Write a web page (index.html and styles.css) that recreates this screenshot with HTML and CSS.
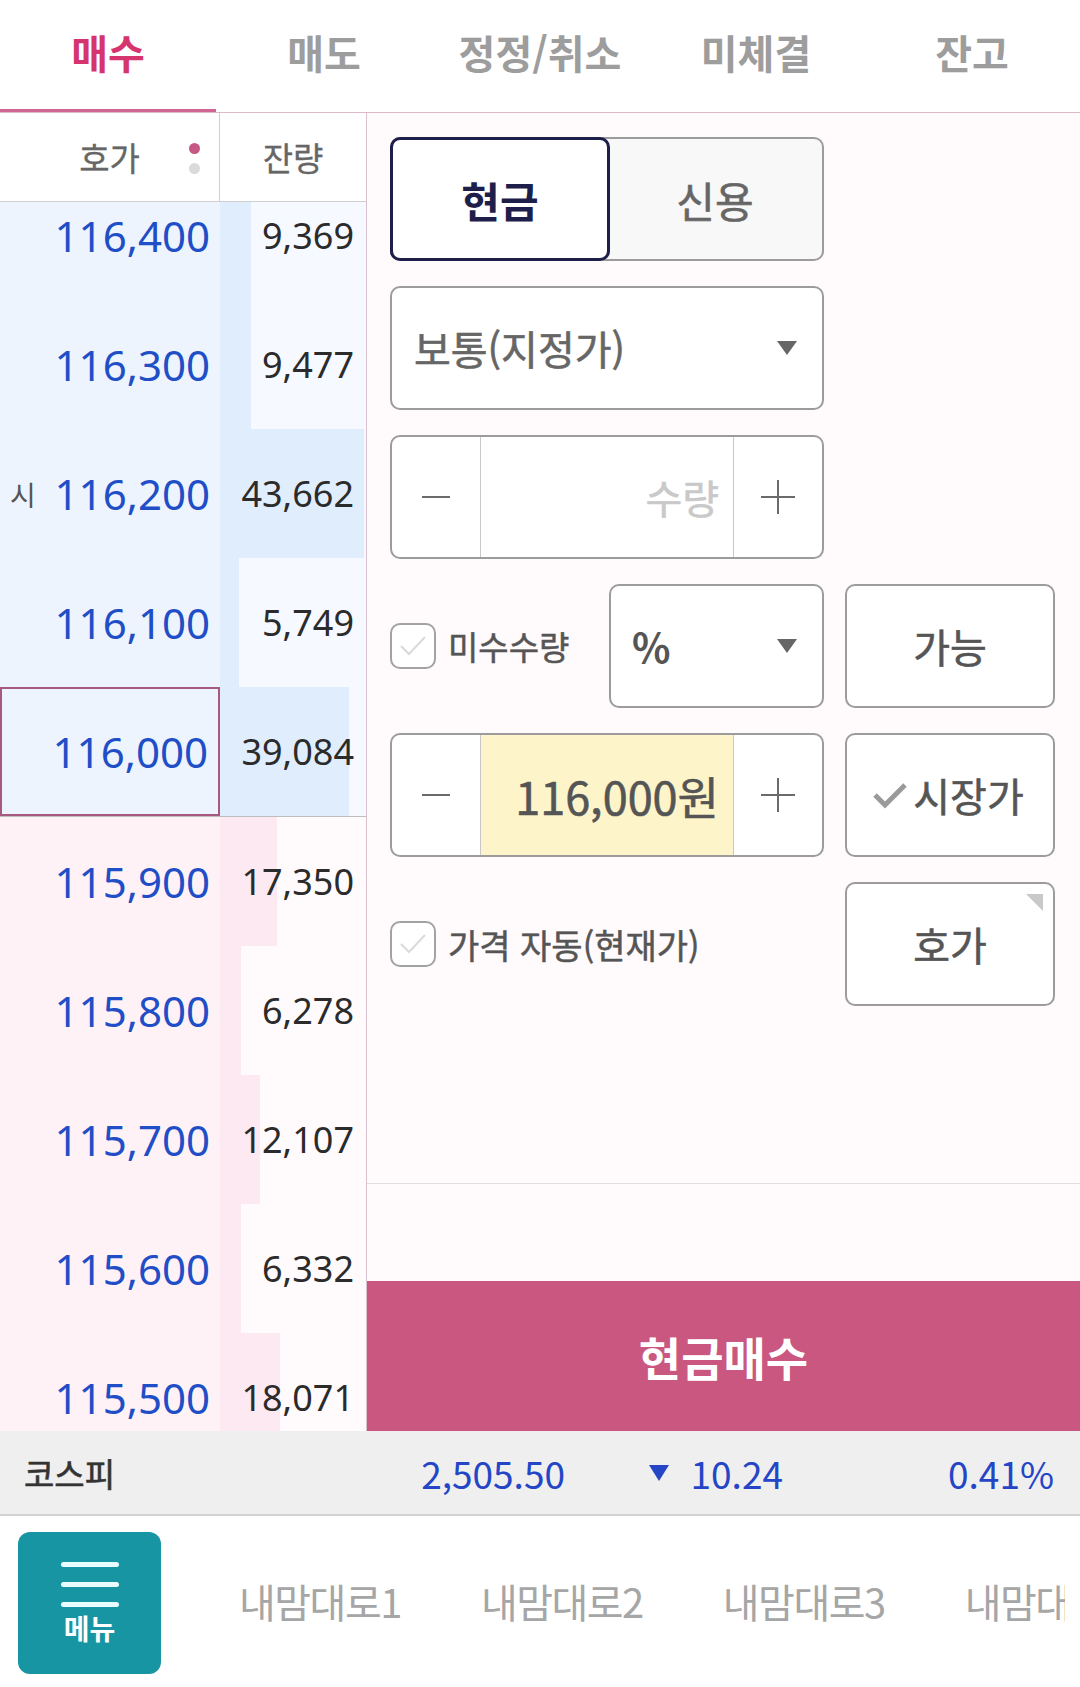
FILE: index.html
```html
<!DOCTYPE html>
<html lang="ko">
<head>
    <meta charset="UTF-8">
    <meta name="viewport" content="width=device-width, initial-scale=1.0">
    <title>주문</title>

    <link rel="stylesheet" href="styles.css">
</head>
<body>
    <div class="screen">
        <nav class="tabs">
            <div class="tab active">매수</div>
            <div class="tab">매도</div>
            <div class="tab">정정/취소</div>
            <div class="tab">미체결</div>
            <div class="tab">잔고</div>
        </nav>

        <div class="main">
            <section class="book">
                <div class="book-head">
                    <div class="head-price">호가<span class="dots"><i class="on"></i><i></i></span></div>
                    <div class="head-qty">잔량</div>
                </div>
                <div class="book-body">
                    <div class="book-rows">
                        <!-- bar widths = qty / max qty * 144px -->
                        <div class="row ask"><div class="price">116,400</div><div class="qty" style="--w: 31px">9,369</div></div>
                        <div class="row ask"><div class="price">116,300</div><div class="qty" style="--w: 31px">9,477</div></div>
                        <div class="row ask"><div class="price"><span class="tag">시</span>116,200</div><div class="qty" style="--w: 144px">43,662</div></div>
                        <div class="row ask"><div class="price">116,100</div><div class="qty" style="--w: 19px">5,749</div></div>
                        <div class="row ask current"><div class="price">116,000</div><div class="qty" style="--w: 129px">39,084</div></div>
                        <div class="row bid"><div class="price">115,900</div><div class="qty" style="--w: 57px">17,350</div></div>
                        <div class="row bid"><div class="price">115,800</div><div class="qty" style="--w: 21px">6,278</div></div>
                        <div class="row bid"><div class="price">115,700</div><div class="qty" style="--w: 40px">12,107</div></div>
                        <div class="row bid"><div class="price">115,600</div><div class="qty" style="--w: 21px">6,332</div></div>
                        <div class="row bid"><div class="price">115,500</div><div class="qty" style="--w: 60px">18,071</div></div>
                    </div>
                </div>
            </section>

            <section class="order">
                <div class="form">
                    <div class="form-row">
                        <div class="seg">
                            <div class="seg-item selected">현금</div>
                            <div class="seg-item">신용</div>
                        </div>
                    </div>

                    <div class="form-row">
                        <div class="select wide"><span>보통(지정가)</span><i class="caret"></i></div>
                    </div>

                    <div class="form-row">
                        <div class="stepper">
                            <div class="step"><svg width="28" height="28" viewBox="0 0 28 28"><path d="M0 14H28" stroke="#6a6a6a" stroke-width="2"/></svg></div>
                            <div class="field placeholder">수량</div>
                            <div class="step"><svg width="34" height="34" viewBox="0 0 34 34"><path d="M0 17H34M17 0V34" stroke="#6a6a6a" stroke-width="2"/></svg></div>
                        </div>
                    </div>

                    <div class="form-row">
                        <div class="pair">
                            <label class="check short">
                                <span class="box"><svg width="30" height="24" viewBox="0 0 30 24"><path d="M3 12L11 20L27 3" fill="none" stroke="#dadada" stroke-width="2"/></svg></span>
                                미수수량
                            </label>
                            <div class="select narrow"><span class="pct">%</span><i class="caret"></i></div>
                        </div>
                        <div class="btn">가능</div>
                    </div>

                    <div class="form-row">
                        <div class="stepper">
                            <div class="step"><svg width="28" height="28" viewBox="0 0 28 28"><path d="M0 14H28" stroke="#6a6a6a" stroke-width="2"/></svg></div>
                            <div class="field price-field">116,000원</div>
                            <div class="step"><svg width="34" height="34" viewBox="0 0 34 34"><path d="M0 17H34M17 0V34" stroke="#6a6a6a" stroke-width="2"/></svg></div>
                        </div>
                        <div class="btn market">
                            <svg width="36" height="28" viewBox="0 0 36 28"><path d="M3 14L13 24L33 4" fill="none" stroke="#9a9a9a" stroke-width="5"/></svg>
                            시장가
                        </div>
                    </div>

                    <div class="form-row">
                        <label class="check long">
                            <span class="box"><svg width="30" height="24" viewBox="0 0 30 24"><path d="M3 12L11 20L27 3" fill="none" stroke="#dadada" stroke-width="2"/></svg></span>
                            가격 자동(현재가)
                        </label>
                        <div class="btn">호가<i class="corner"></i></div>
                    </div>
                </div>

                <div class="order-info"></div>
                <div class="buy-btn">현금매수</div>
            </section>
        </div>

        <div class="index-bar">
            <div class="index-name">코스피</div>
            <div class="index-value">2,505.50</div>
            <div class="index-change"><i class="down"></i>10.24</div>
            <div class="index-rate">0.41%</div>
        </div>

        <footer class="bottom-nav">
            <div class="menu">
                <span class="bar"></span>
                <span class="bar"></span>
                <span class="bar"></span>
                <span class="menu-label">메뉴</span>
            </div>
            <div class="shortcuts">
                <span>내맘대로1</span>
                <span>내맘대로2</span>
                <span>내맘대로3</span>
                <span>내맘대로4</span>
            </div>
        </footer>
    </div>
</body>
</html>
```

FILE: styles.css
```css
* {
    box-sizing: border-box;
}

body, html {
    padding: 0;
    margin: 0;
}

body {
    font-family: "Noto Sans CJK KR", "Noto Sans", sans-serif;
    color: #333;
    background: #fff;
}

.screen {
    width: 1080px;
    height: 1687px;
    display: flex;
    flex-direction: column;
    overflow: hidden;
}

/* top tabs */
.tabs {
    display: flex;
    height: 113px;
    flex: none;
    border-bottom: 1px solid #dcb8c8;
}

.tab {
    flex: 1;
    display: flex;
    align-items: center;
    justify-content: center;
    padding-bottom: 8px;
    font-size: 40px;
    font-weight: 700;
    color: #9d9d9d;
}

.tab.active {
    color: #d5346f;
    box-shadow: inset 0 -3px 0 #cf6590;
}

.main {
    display: flex;
    height: 1318px;
    flex: none;
}

/* order book */
.book {
    width: 367px;
    display: flex;
    flex-direction: column;
    border-right: 1px solid #d9c2ce;
}

.book-head {
    height: 89px;
    flex: none;
    display: flex;
    border-bottom: 1px solid #cfcfcf;
    background: #fff;
    font-size: 33px;
    color: #666;
    -webkit-text-stroke: 0.3px currentColor;
}

.head-price {
    width: 220px;
    position: relative;
    display: flex;
    align-items: center;
    justify-content: center;
    border-right: 1px solid #cfcfcf;
}

.dots {
    position: absolute;
    right: 19px;
    top: 30px;
    display: flex;
    flex-direction: column;
    gap: 9px;
}

.dots i {
    width: 11px;
    height: 11px;
    border-radius: 50%;
    background: #dadada;
}

.dots i.on {
    background: #c65886;
}

.head-qty {
    flex: 1;
    display: flex;
    align-items: center;
    justify-content: center;
}

.book-body {
    flex: 1;
    overflow: hidden;
}

.book-rows {
    margin-top: -31px;
}

.row {
    display: flex;
    height: 129px;
}

.row.ask {
    --pbg: #edf4fd;
    --bar: #e0edfc;
    --qbg: #f6f9ff;
}

.row.bid {
    --pbg: #fff2f7;
    --bar: #fde9f1;
    --qbg: #fffbfc;
}

.price {
    width: 220px;
    display: flex;
    align-items: center;
    justify-content: flex-end;
    padding-right: 10px;
    background: var(--pbg);
    font-family: "Noto Sans", "Noto Sans CJK KR", sans-serif;
    font-size: 42px;
    color: #1f4ec6;
}

.price .tag {
    margin-right: auto;
    padding-left: 10px;
    font-family: "Noto Sans CJK KR", sans-serif;
    font-size: 28px;
    color: #555;
}

.qty {
    flex: 1;
    display: flex;
    align-items: center;
    justify-content: flex-end;
    padding-right: 12px;
    background: linear-gradient(to right, var(--bar) var(--w), var(--qbg) var(--w));
    font-family: "Noto Sans", "Noto Sans CJK KR", sans-serif;
    font-size: 36px;
    color: #2b2b2b;
}

.row.current {
    height: 130px;
    border-bottom: 1px solid #bdbdbd;
}

.row.current .price {
    border: 2px solid #a65a82;
}

/* order form */
.order {
    flex: 1;
    display: flex;
    flex-direction: column;
    background: #fffafb;
}

.form {
    display: flex;
    flex-direction: column;
    gap: 25px;
    padding: 24px 25px 0 23px;
}

.form-row {
    display: flex;
    gap: 21px;
    height: 124px;
}

.seg {
    width: 434px;
    display: flex;
    border: 2px solid #9c9c9c;
    border-radius: 10px;
    background: #f8f8f8;
}

.seg-item {
    flex: 1;
    display: flex;
    align-items: center;
    justify-content: center;
    font-size: 42px;
    color: #666;
    -webkit-text-stroke: 0.6px currentColor;
}

.seg-item.selected {
    margin: -2px;
    border: 3px solid #1e1e4b;
    border-radius: 10px;
    background: #fff;
    font-weight: 700;
    color: #1e1e4b;
    -webkit-text-stroke: 0;
}

.select {
    display: flex;
    align-items: center;
    justify-content: space-between;
    padding: 0 25px 0 22px;
    border: 2px solid #9c9c9c;
    border-radius: 10px;
    background: #fff;
    font-size: 40px;
    color: #666;
    -webkit-text-stroke: 0.6px currentColor;
}

.select.wide {
    width: 434px;
}

.select.narrow {
    width: 215px;
    padding-left: 21px;
}

.select .pct {
    font-weight: 700;
    color: #555;
    -webkit-text-stroke: 0;
}

.caret {
    width: 0;
    height: 0;
    border-left: 10px solid transparent;
    border-right: 10px solid transparent;
    border-top: 14px solid #666;
}

.stepper {
    width: 434px;
    display: flex;
    border: 2px solid #9c9c9c;
    border-radius: 10px;
    background: #fff;
    overflow: hidden;
}

.step {
    width: 88px;
    display: flex;
    align-items: center;
    justify-content: center;
}

.field {
    flex: 1;
    display: flex;
    align-items: center;
    justify-content: flex-end;
    padding-right: 14px;
    border-left: 1px solid #c8c8c8;
    border-right: 1px solid #c8c8c8;
    font-size: 40px;
    -webkit-text-stroke: 0.6px currentColor;
}

.field.placeholder {
    color: #c9c9c9;
}

.field.price-field {
    background: #fdf4c9;
    font-size: 45px;
    color: #555;
}

.pair {
    width: 434px;
    display: flex;
}

.check {
    display: flex;
    align-items: center;
    gap: 12px;
    color: #555;
    -webkit-text-stroke: 0.5px currentColor;
}

.check.short {
    width: 219px;
    font-size: 33px;
}

.check.long {
    width: 434px;
    font-size: 34px;
}

.box {
    width: 46px;
    height: 46px;
    flex: none;
    display: flex;
    align-items: center;
    justify-content: center;
    border: 2px solid #a3a3a3;
    border-radius: 10px;
    background: #fff;
}

.btn {
    width: 210px;
    position: relative;
    display: flex;
    align-items: center;
    justify-content: center;
    border: 2px solid #9c9c9c;
    border-radius: 10px;
    background: #fff;
    font-size: 40px;
    color: #555;
    -webkit-text-stroke: 0.6px currentColor;
}

.btn.market {
    gap: 5px;
    padding-right: 4px;
}

.corner {
    position: absolute;
    top: 10px;
    right: 10px;
    width: 0;
    height: 0;
    border-top: 17px solid #c9c9c9;
    border-left: 17px solid transparent;
}

.order-info {
    margin-top: auto;
    height: 98px;
    border-top: 1px solid #e4dde0;
}

.buy-btn {
    height: 150px;
    display: flex;
    align-items: center;
    justify-content: center;
    background: #c9577f;
    font-size: 46px;
    font-weight: 700;
    color: #fff;
}

/* index bar */
.index-bar {
    height: 85px;
    flex: none;
    display: grid;
    grid-template-columns: 396px 145px 218px 1fr;
    align-items: center;
    padding: 0 26px 0 24px;
    background: #efefef;
    border-bottom: 2px solid #d3d3d3;
    font-size: 37px;
    color: #2446c6;
}

.index-name {
    font-size: 33px;
    color: #333;
    -webkit-text-stroke: 0.6px currentColor;
}

.index-value,
.index-rate {
    text-align: right;
}

.index-change {
    display: flex;
    align-items: center;
    justify-content: flex-end;
    gap: 22px;
}

.down {
    width: 0;
    height: 0;
    border-left: 10px solid transparent;
    border-right: 10px solid transparent;
    border-top: 16px solid #2446c6;
}

/* bottom nav */
.bottom-nav {
    flex: 1;
    display: flex;
    align-items: flex-start;
    padding: 16px 0 0 18px;
    background: #fff;
}

.menu {
    width: 143px;
    height: 142px;
    flex: none;
    display: flex;
    flex-direction: column;
    align-items: center;
    gap: 15px;
    padding-top: 30px;
    border-radius: 12px;
    background: #1895a2;
}

.menu .bar {
    width: 58px;
    height: 5px;
    border-radius: 3px;
    background: #e9fcff;
}

.menu-label {
    margin-top: -10px;
    font-size: 28px;
    font-weight: 700;
    line-height: 1.2;
    color: #fff;
}

.shortcuts {
    width: 826px;
    flex: none;
    display: flex;
    gap: 80px;
    margin: 40px 0 0 78px;
    overflow: hidden;
    white-space: nowrap;
    font-size: 40px;
    letter-spacing: -1.5px;
    color: #a6a6a6;
}
```
